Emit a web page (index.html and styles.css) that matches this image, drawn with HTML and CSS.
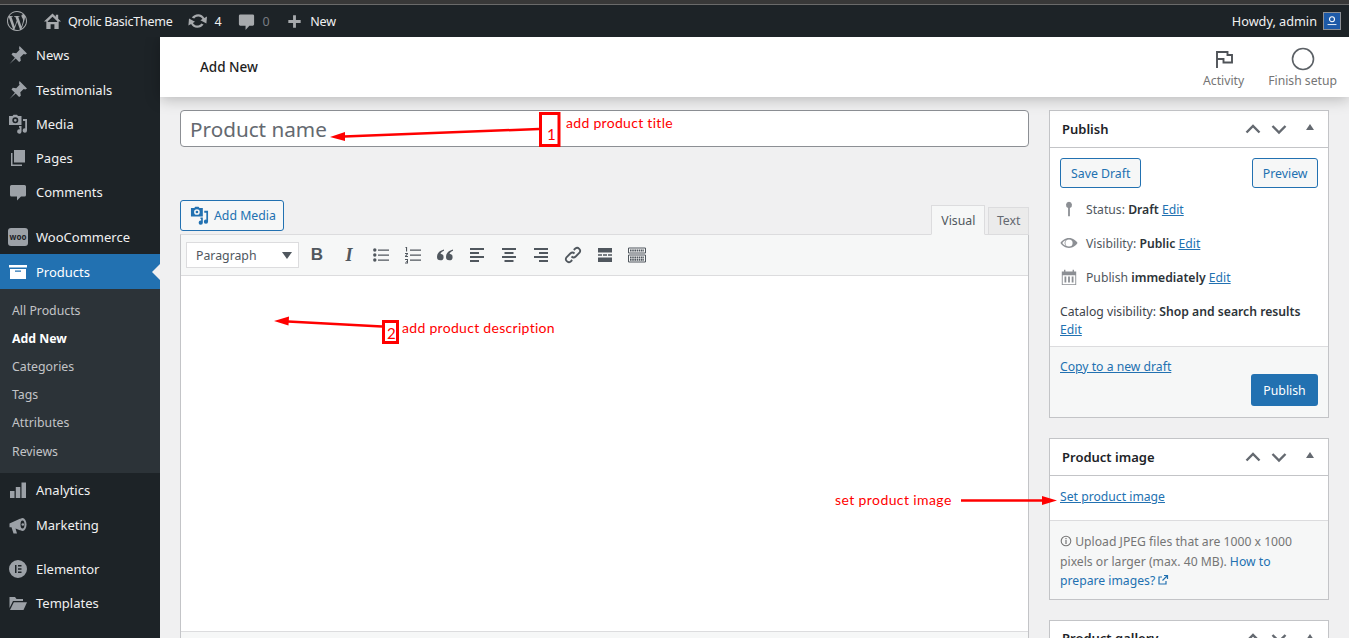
FILE: index.html
```html
<!DOCTYPE html>
<html lang="en">
<head>
  <meta charset="UTF-8">
  <meta name="viewport" content="width=device-width, initial-scale=1.0">
  <title>Add New Product</title>
  <link rel="stylesheet" href="styles.css">
</head>
<body>

<svg class="defs" width="0" height="0">
  <defs>
    <symbol id="i-pin" viewBox="0 0 20 20"><path d="M11.500 1l7.500 7.500-1.700 1-1.600-.6-3.400 3.400.5 3.400-1.700 1.300-3.400-3.400-6.200 5.400 5.400-6.200-3.400-3.400 1.300-1.700 3.400.5 3.400-3.400-.6-1.600z"/></symbol>
    <symbol id="i-media" viewBox="0 0 20 20"><path d="M1 2h3.500l1-1.200h3.500l1 1.200h3.500v9H1zM7.300 3.300a3 3 0 1 0 0 6 3 3 0 0 0 0-6zM7.300 4.900a1.400 1.400 0 1 1 0 2.800 1.400 1.400 0 0 1 0-2.800z" fill-rule="evenodd"/><path d="M15 5h4v11.500a2.200 2.200 0 1 1-1.800-2.100V7H15zM11 12h2.500v5.500a2.200 2.200 0 1 1-1.800-2.100v-1.600H11z"/></symbol>
    <symbol id="i-up" viewBox="0 0 20 20"><path d="M3.500 13.500L10 7l6.500 6.500" fill="none" stroke-width="2.400"/></symbol>
    <symbol id="i-down" viewBox="0 0 20 20"><path d="M3.500 7L10 13.500 16.500 7" fill="none" stroke-width="2.400"/></symbol>
  </defs>
</svg>

<div class="top-strip"></div>

<!-- admin bar -->
<div class="adminbar">
  <div class="bar-left">
    <svg class="wp-logo" viewBox="0 0 24 24"><path d="M21.469 6.825c.84 1.537 1.318 3.3 1.318 5.175 0 3.979-2.156 7.456-5.363 9.325l3.295-9.527c.615-1.54.82-2.771.82-3.864 0-.405-.026-.78-.07-1.11m-7.981.105c.647-.03 1.232-.105 1.232-.105.582-.075.514-.93-.067-.899 0 0-1.755.135-2.88.135-1.064 0-2.85-.15-2.85-.15-.585-.03-.661.855-.075.885 0 0 .54.061 1.125.09l1.68 4.605-2.37 7.08L5.354 6.9c.649-.03 1.234-.1 1.234-.1.585-.075.516-.93-.065-.896 0 0-1.746.138-2.874.138-.2 0-.438-.008-.69-.015C4.911 3.15 8.235 1.215 12 1.215c2.809 0 5.365 1.072 7.286 2.833-.046-.003-.091-.009-.141-.009-1.06 0-1.812.923-1.812 1.914 0 .89.513 1.643 1.06 2.531.411.72.89 1.643.89 2.977 0 .915-.354 1.994-.821 3.479l-1.075 3.585-3.9-11.61.001.014zM12 22.784c-1.059 0-2.081-.153-3.048-.437l3.237-9.406 3.315 9.087c.024.053.05.101.078.149-1.12.393-2.325.609-3.582.609M1.211 12c0-1.564.336-3.05.935-4.39L7.29 21.709C3.694 19.96 1.212 16.271 1.211 12M12 0C5.385 0 0 5.385 0 12s5.385 12 12 12 12-5.385 12-12S18.615 0 12 0"/></svg>
    <span class="bar-item site">
      <svg class="bar-icon" viewBox="0 0 20 20"><path d="M10 1.500L1 10h2.500v8h4.500v-5h4v5h4.500v-8H19l-3-2.800V3h-2.500v1.900zM10 5l5 4.700v.8H5v-.8z" fill-rule="evenodd"/></svg>
      Qrolic BasicTheme
    </span>
    <span class="bar-item updates">
      <svg class="bar-icon" viewBox="0 0 20 20"><path d="M10.200 3.300c2.700 0 5 1.500 6.100 3.800L19 5.500l-.6 7-6-3.300 2.100-1.200c-.8-1.500-2.400-2.600-4.300-2.600-1.700 0-3.200.9-4 2.200L3.800 6.600c1.300-2 3.700-3.300 6.400-3.300zM1 7.500l6 3.300-2.100 1.200c.8 1.500 2.400 2.600 4.300 2.600 1.700 0 3.200-.9 4-2.200l2.400 1c-1.300 2-3.700 3.300-6.400 3.300-2.700 0-5-1.500-6.100-3.800L.4 14.500z"/></svg>
      4
    </span>
    <span class="bar-item comments">
      <svg class="bar-icon" viewBox="0 0 20 20"><path d="M3.500 2.500h13a1.500 1.500 0 0 1 1.500 1.500v9a1.500 1.500 0 0 1-1.500 1.500H13L9 19v-4.500H3.500A1.500 1.500 0 0 1 2 13V4a1.500 1.500 0 0 1 1.500-1.500z"/></svg>
      <span class="dim">0</span>
    </span>
    <span class="bar-item new">
      <svg class="bar-icon" viewBox="0 0 20 20"><path d="M8.500 3.500h3v5h5v3h-5v5h-3v-5h-5v-3h5z"/></svg>
      New
    </span>
  </div>
  <div class="bar-right">
    Howdy, admin
    <span class="avatar"><svg viewBox="0 0 18 18"><circle cx="9" cy="7" r="2.800" fill="none" stroke="#fff" stroke-width="1.200"/><path d="M4 13h10" stroke="#fff" stroke-width="1"/></svg></span>
  </div>
</div>

<div class="layout">

  <!-- sidebar -->
  <nav class="sidebar">
    <a class="menu-item"><svg class="menu-icon"><use href="#i-pin"/></svg>News</a>
    <a class="menu-item"><svg class="menu-icon"><use href="#i-pin"/></svg>Testimonials</a>
    <a class="menu-item"><svg class="menu-icon"><use href="#i-media"/></svg>Media</a>
    <a class="menu-item"><svg class="menu-icon" viewBox="0 0 20 20"><path d="M6 2h11v12.500H6z"/><path d="M3 5h1.500v11.500H14V18H3z"/></svg>Pages</a>
    <a class="menu-item"><svg class="menu-icon" viewBox="0 0 20 20"><path d="M3.500 3h13A1.500 1.500 0 0 1 18 4.500v8.500a1.500 1.500 0 0 1-1.500 1.500H13L9 18.500v-4H3.500A1.500 1.500 0 0 1 2 13V4.500A1.500 1.500 0 0 1 3.500 3z"/></svg>Comments</a>
    <div class="menu-sep"></div>
    <a class="menu-item"><span class="woo-icon">woo</span>WooCommerce</a>
    <a class="menu-item current"><svg class="menu-icon" viewBox="0 0 20 20"><path d="M1 3h18v2.500H1zM2 7h16v10H2zM7 8.500v1.200h6V8.500z" fill-rule="evenodd"/></svg>Products</a>
    <div class="submenu">
      <a>All Products</a>
      <a class="active">Add New</a>
      <a>Categories</a>
      <a>Tags</a>
      <a>Attributes</a>
      <a class="last">Reviews</a>
    </div>
    <a class="menu-item"><svg class="menu-icon" viewBox="0 0 20 20"><path d="M2 11h4.500v7H2zM7.800 7h4.500v11H7.800zM13.500 2.500H18V18h-4.500z"/></svg>Analytics</a>
    <a class="menu-item"><svg class="menu-icon" viewBox="0 0 20 20"><path d="M1.500 8.500L12.500 3.500v12L7.500 13.500l1.500 5H5.500l-2-6.200H1.500z"/><ellipse cx="14.500" cy="9.500" rx="4" ry="6.500"/><ellipse cx="14.500" cy="9.500" rx="2" ry="4" fill="#1d2327"/><circle cx="14.800" cy="9.500" r="1.300"/></svg>Marketing</a>
    <div class="menu-sep short"></div>
    <a class="menu-item"><svg class="menu-icon" viewBox="0 0 20 20"><path d="M10 1a9 9 0 1 0 0 18 9 9 0 0 0 0-18zM7 6h1.500v8H7zM10 6h3.500v1.500H10zM10 9.200h3.500v1.500H10zM10 12.500h3.500V14H10z" fill-rule="evenodd"/></svg>Elementor</a>
    <a class="menu-item"><svg class="menu-icon" viewBox="0 0 20 20"><path d="M1.500 4h5.500l1.500 2H15v2H5L1.500 15z"/><path d="M5.800 9.200H19L15.500 17H2z"/></svg>Templates</a>
  </nav>

  <div class="main">
    <header class="page-header">
      <h1>Add New</h1>
      <div class="header-actions">
        <div class="header-action">
          <svg viewBox="0 0 24 24"><path d="M5 21V5h10.500v3H20v7.500h-8.500V12H5" fill="none" stroke="#4f5358" stroke-width="1.900"/></svg>
          <span>Activity</span>
        </div>
        <div class="header-action">
          <svg viewBox="0 0 24 24"><circle cx="12" cy="12" r="10.500" fill="none" stroke="#5c6166" stroke-width="1.600"/></svg>
          <span>Finish setup</span>
        </div>
      </div>
    </header>

    <div class="columns">
      <div class="col-left">
        <div class="title-input">Product name</div>

        <div class="editor-head">
          <button class="btn add-media"><svg class="media-icon"><use href="#i-media"/></svg>Add Media</button>
          <div class="tabs">
            <span class="tab on">Visual</span>
            <span class="tab">Text</span>
          </div>
        </div>

        <div class="editor">
          <div class="toolbar">
            <div class="format-select">Paragraph<i class="caret"></i></div>
            <span class="tool tool-b">B</span>
            <span class="tool tool-i">I</span>
            <span class="tool"><svg viewBox="0 0 20 20"><path d="M7 4.500h11v1.200H7zM7 9.500h11v1.200H7zM7 14.500h11v1.200H7z"/><circle cx="3.800" cy="5" r="1.700"/><circle cx="3.800" cy="10" r="1.700"/><circle cx="3.800" cy="15" r="1.700"/></svg></span>
            <span class="tool"><svg viewBox="0 0 20 20"><path d="M7 4.500h11v1.200H7zM7 9.500h11v1.200H7zM7 14.500h11v1.200H7z"/><path d="M2.500 2h1.600v4.500H3V3H2.500zM2 8h3v1L3.300 11H5v1H2v-1l1.800-2H2zM2 14h3v4.500H2v-.9h2v-.9H3v-.8h1v-1H2z"/></svg></span>
            <span class="tool"><svg viewBox="0 0 20 20"><path d="M9 4.500C5 5.500 2 8 2 12a3.300 3.300 0 1 0 3.500-3.300C6 7.400 7.500 6.300 9 5.800zM18 4.500C14 5.500 11 8 11 12a3.300 3.300 0 1 0 3.500-3.300c.5-1.300 2-2.400 3.500-2.900z"/></svg></span>
            <span class="tool"><svg viewBox="0 0 20 20"><path d="M3 3h14v2H3zM3 7h9v2H3zM3 11h14v2H3zM3 15h9v2H3z"/></svg></span>
            <span class="tool"><svg viewBox="0 0 20 20"><path d="M3 3h14v2H3zM5.500 7h9v2h-9zM3 11h14v2H3zM5.500 15h9v2h-9z"/></svg></span>
            <span class="tool"><svg viewBox="0 0 20 20"><path d="M3 3h14v2H3zM8 7h9v2H8zM3 11h14v2H3zM8 15h9v2H8z"/></svg></span>
            <span class="tool"><svg viewBox="0 0 20 20"><path d="M8.500 11.500a3 3 0 0 0 4.200 0l3.800-3.800a3 3 0 0 0-4.200-4.200l-1.500 1.500M11.500 8.500a3 3 0 0 0-4.200 0l-3.800 3.800a3 3 0 0 0 4.200 4.200l1.500-1.500" fill="none" stroke="#50575e" stroke-width="1.800"/></svg></span>
            <span class="tool"><svg viewBox="0 0 20 20"><path d="M3 3h14v4.500H3zM3 12.500h14V17H3zM3 9.300h4v1.400H3zM8 9.300h4v1.400H8zM13 9.300h4v1.400h-4z"/></svg></span>
            <span class="tool"><svg viewBox="0 0 20 20"><path d="M1.500 3h17v5h-17zM1.500 10h17v7h-17z" fill="none" stroke="#50575e" stroke-width="1"/><path d="M3 5.500h14M3 12.500h14M3 14.800h14" fill="none" stroke="#50575e" stroke-width="1.800" stroke-dasharray="1.600 .6"/></svg></span>
          </div>
          <div class="editor-body"></div>
          <div class="editor-foot"></div>
        </div>
      </div>

      <div class="col-right">
        <section class="box publish">
          <div class="box-head">
            <h2>Publish</h2>
            <div class="box-ctrl">
              <svg><use href="#i-up"/></svg>
              <svg><use href="#i-down"/></svg>
              <i class="tri"></i>
            </div>
          </div>
          <div class="publish-actions">
            <button class="btn">Save Draft</button>
            <button class="btn">Preview</button>
          </div>
          <div class="pub-row">
            <svg viewBox="0 0 20 20"><path d="M10 2a3.500 3.500 0 0 0-1 6.800V18h2V8.800A3.500 3.500 0 0 0 10 2z"/></svg>
            <span>Status: <b>Draft</b> <a>Edit</a></span>
          </div>
          <div class="pub-row">
            <svg viewBox="0 0 20 20"><path d="M10 4.500c4.500 0 8 3 9.500 5.500-1.500 2.500-5 5.500-9.500 5.500S2 12.500.5 10C2 7.500 5.500 4.500 10 4.500zM10 6a4 4 0 1 0 0 8 4 4 0 0 0 0-8zM2.500 10c1 1.300 2.300 2.500 4 3.300a5 5 0 0 1 0-6.600c-1.700.8-3 2-4 3.300z" fill-rule="evenodd"/></svg>
            <span>Visibility: <b>Public</b> <a>Edit</a></span>
          </div>
          <div class="pub-row">
            <svg viewBox="0 0 20 20"><path d="M2 4h2.500V2H6v2h8V2h1.500v2H18v15H2zM3 8v10h14V8zM5 9.500h2V16H5zM9 9.500h2V16H9zM13 9.500h2V16h-2z" fill-rule="evenodd"/></svg>
            <span>Publish <b>immediately</b> <a>Edit</a></span>
          </div>
          <div class="catalog">Catalog visibility: <b>Shop and search results</b><br><a>Edit</a></div>
          <div class="box-foot">
            <a>Copy to a new draft</a>
            <button class="btn-primary">Publish</button>
          </div>
        </section>

        <section class="box">
          <div class="box-head">
            <h2>Product image</h2>
            <div class="box-ctrl">
              <svg><use href="#i-up"/></svg>
              <svg><use href="#i-down"/></svg>
              <i class="tri"></i>
            </div>
          </div>
          <div class="image-link"><a>Set product image</a></div>
          <div class="image-note">
            <div class="note-line"><svg class="info" viewBox="0 0 20 20"><circle cx="10" cy="10" r="8" fill="none" stroke="#757575" stroke-width="1.800"/><path d="M9 8.500h2V15H9zM9 5h2v2H9z" fill="#757575"/></svg> Upload JPEG files that are 1000 x 1000</div>
            <div class="note-line">pixels or larger (max. 40 MB). <a class="plain">How to</a></div>
            <div class="note-line"><a class="plain">prepare images?<svg class="ext" viewBox="0 0 12 12"><path d="M9 7v3H2V3h3M7 1.500h3.500V5M10.500 1.500L5.500 6.500" fill="none" stroke="#2271b1" stroke-width="1.200"/></svg></a></div>
          </div>
        </section>

        <section class="box">
          <div class="box-head">
            <h2>Product gallery</h2>
            <div class="box-ctrl">
              <svg><use href="#i-up"/></svg>
              <svg><use href="#i-down"/></svg>
              <i class="tri"></i>
            </div>
          </div>
        </section>
      </div>
    </div>
  </div>
</div>

<!-- red annotations drawn over the screenshot -->
<svg class="notes-art" viewBox="0 0 1349 638">
  <rect x="540.500" y="113.500" width="18.500" height="32" fill="none" stroke="#f00" stroke-width="3"/>
  <path d="M539 129L344 136.500" stroke="#f00" stroke-width="2.500"/>
  <path d="M330 137l15-5 0 9z" fill="#f00"/>
  <rect x="383.500" y="321.500" width="14" height="21" fill="none" stroke="#f00" stroke-width="3"/>
  <path d="M382 326.500L288 321.500" stroke="#f00" stroke-width="2.500"/>
  <path d="M274 321l15-4.500-.5 9z" fill="#f00"/>
  <path d="M961 500.500h86" stroke="#f00" stroke-width="2.500"/>
  <path d="M1057 500.500l-15-4.500v9z" fill="#f00"/>
</svg>
<span class="note num num-1">1</span>
<span class="note label-1">add product title</span>
<span class="note num num-2">2</span>
<span class="note label-2">add product description</span>
<span class="note label-3">set product image</span>

</body>
</html>
```

FILE: styles.css
```css
/* Basic styling */
* { box-sizing: border-box; margin: 0; padding: 0; }
html, body { height: 100%; overflow: hidden; }
body { font-family: "Noto Sans", "Open Sans", sans-serif; font-size: 13px; color: #3c434a; background-color: #f0f0f1; display: flex; flex-direction: column; position: relative; }
a { color: #2271b1; text-decoration: underline; }
b { font-weight: 600; color: #2c3338; }
.defs { position: absolute; }
svg { fill: currentColor; stroke: currentColor; stroke-width: 0; display: block; }

/* Top strip */
.top-strip { height: 5px; background-color: #383838; border-bottom: 1px solid #6a6a6a; flex: none; }

/* Admin bar */
.adminbar { height: 32px; flex: none; background-color: #1d2327; color: #f0f0f1; display: flex; align-items: center; justify-content: space-between; padding: 0 8px 0 7px; font-size: 12.500px; letter-spacing: -0.25px; }
.bar-left { display: flex; align-items: center; }
.wp-logo { width: 20px; height: 20px; color: #a7aaad; margin-right: 16px; }
.bar-item { display: flex; align-items: center; gap: 6px; margin-right: 15px; }
.bar-icon { width: 19px; height: 19px; color: #a7aaad; }
.updates { gap: 7px; margin-right: 16px; }
.updates .bar-icon { width: 20px; height: 20px; }
.comments { gap: 6px; margin-right: 16px; }
.new { gap: 6px; }
.bar-right { display: flex; align-items: center; gap: 6px; letter-spacing: 0; font-size: 12.700px; }
.avatar { width: 18px; height: 18px; background-color: #1d5aa8; border: 1px solid #8c8f94; }
.avatar svg { width: 16px; height: 16px; }
.dim { color: #787c82; }

/* Layout */
.layout { flex: 1; display: flex; min-height: 0; overflow: hidden; }
.sidebar { width: 160px; flex: none; background-color: #1d2327; padding-top: 1.300px; }
.menu-item { height: 34.25px; display: flex; align-items: center; padding-left: 8px; color: #f0f0f1; text-decoration: none; font-size: 13px; position: relative; }
.menu-icon { width: 20px; height: 20px; margin-right: 8px; color: #9ca1a7; flex: none; }
.menu-sep { height: 10.700px; }
.menu-sep.short { height: 10.300px; }
.woo-icon { width: 20px; height: 18px; margin-right: 8px; border-radius: 3px; background-color: #9ca1a7; color: #1d2327; font-size: 8px; font-weight: 700; line-height: 17px; text-align: center; flex: none; }
.menu-item.current { background-color: #2271b1; color: #fff; }
.menu-item.current .menu-icon { color: #fff; }
.menu-item.current::after { content: ""; position: absolute; right: 0; top: 10px; border: 8px solid transparent; border-right-color: #f0f0f1; border-left: 0; }
.submenu { background-color: #2c3338; padding: 7.500px 0 8px; }
.submenu a { height: 28px; display: flex; align-items: center; padding-left: 12px; color: #c3c4c7; text-decoration: none; font-size: 12.300px; }
.submenu a.last { margin-top: 1px; }
.submenu a.active { color: #fff; font-weight: 700; }

/* Page */
.main { flex: 1; min-width: 0; display: flex; flex-direction: column; }
.page-header { height: 60px; flex: none; background-color: #fff; display: flex; align-items: center; justify-content: space-between; padding: 0 12px 0 40px; position: relative; z-index: 1; box-shadow: 0 2px 14px rgba(0, 0, 0, 0.25); }
.page-header h1 { font-size: 13.500px; font-weight: 500; color: #1e1e1e; }
.header-actions { display: flex; gap: 24px; }
.header-action { display: flex; flex-direction: column; align-items: center; gap: 1px; padding-top: 1px; font-size: 12.200px; color: #757575; }
.header-action svg { width: 24px; height: 24px; }

.columns { display: flex; gap: 20px; padding: 13px 20px 0; }
.col-left { flex: 1; min-width: 0; }
.col-right { width: 280px; flex: none; display: flex; flex-direction: column; gap: 20px; }

/* Title and editor */
.title-input { height: 37px; background-color: #fff; border: 1px solid #8c8f94; border-radius: 4px; padding-left: 9px; font-size: 20.700px; line-height: 37px; color: #646970; }
.editor-head { display: flex; justify-content: space-between; align-items: flex-end; margin-top: 53px; height: 34px; }
.btn { height: 30px; padding: 0 10px; background-color: #f6f7f7; border: 1px solid #2271b1; border-radius: 3px; color: #2271b1; font-family: inherit; font-size: 12.300px; }
.publish-actions .btn + .btn { padding: 0 9.500px; }
.add-media { height: 31px; margin-bottom: 3px; display: flex; align-items: center; gap: 5px; padding: 0 7px 0 9px; }
.media-icon { width: 19px; height: 19px; }
.tabs { display: flex; gap: 3px; align-items: flex-end; margin-bottom: -1px; position: relative; }
.tab { height: 28px; padding: 0 7.500px; border: 1px solid #dcdcde; background-color: #ebebeb; color: #646970; font-size: 12.300px; line-height: 26px; }
.tab.on { height: 30px; padding: 0 9px; line-height: 30px; background-color: #f6f7f7; border-bottom-color: #f6f7f7; color: #50575e; }

.editor { border: 1px solid #dcdcde; border-left-color: #c3c4c7; border-right-color: #c3c4c7; background-color: #fff; }
.toolbar { height: 41px; background-color: #f6f7f7; border-bottom: 1px solid #dcdcde; display: flex; align-items: center; padding-left: 5px; }
.format-select { width: 113px; height: 26px; margin-right: 2px; background-color: #fff; border: 1px solid #dcdcde; padding: 0 9px; display: flex; align-items: center; justify-content: space-between; font-size: 12.300px; color: #50575e; }
.caret { border: 5px solid transparent; border-top: 7px solid #50575e; border-bottom: 0; margin-right: -3px; }
.tool { width: 32px; height: 26px; display: flex; align-items: center; justify-content: center; color: #50575e; }
.tool svg { width: 20px; height: 20px; }
.tool-b { font-family: "Liberation Sans", sans-serif; font-weight: 700; font-size: 17px; }
.tool-i { font-family: "Liberation Serif", serif; font-weight: 700; font-style: italic; font-size: 18px; }
.editor-body { height: 355px; }
.editor-foot { height: 40px; border-top: 1px solid #dcdcde; background-color: #f6f7f7; }

/* Sidebar boxes */
.box { background-color: #fff; border: 1px solid #c3c4c7; flex: none; }
.box-head { height: 37px; border-bottom: 1px solid #c3c4c7; display: flex; align-items: center; justify-content: space-between; padding: 0 14px 1px 12px; }
.box-head h2 { font-size: 13px; font-weight: 600; color: #1d2327; }
.box-ctrl { display: flex; align-items: center; gap: 6px; color: #646970; }
.box-ctrl svg { width: 20px; height: 20px; stroke-width: 2.400; }
.tri { border: 4.500px solid transparent; border-bottom: 6px solid #646970; border-top: 0; margin-left: 11px; margin-bottom: 3px; }

.publish-actions { display: flex; justify-content: space-between; padding: 10px 10px 0; }
.pub-row { display: flex; align-items: center; height: 34px; padding-left: 10px; font-size: 12.200px; gap: 8px; color: #50575e; }
.publish-actions + .pub-row { margin-top: 4px; }
.pub-row svg { width: 18px; height: 18px; color: #8c8f94; flex: none; }
.catalog { padding: 9px 10px 7px; font-size: 12.200px; line-height: 18px; color: #3c434a; }
.box-foot { background-color: #f6f7f7; border-top: 1px solid #dcdcde; padding: 11px 10px 9px; font-size: 12.200px; display: flex; flex-direction: column; align-items: flex-start; height: 71px; }
.btn-primary { align-self: flex-end; flex: none; width: 67px; height: 32px; margin-top: -0.600px; background-color: #2271b1; border: 0; border-radius: 3px; color: #fff; font-family: inherit; font-size: 12.300px; }

.image-link { height: 44px; padding: 12px 10px; font-size: 12.200px; }
.image-note { background-color: #f6f7f7; border-top: 1px solid #dcdcde; padding: 11px 10px 8px; font-size: 12.200px; line-height: 19.500px; color: #757575; }
.info { display: inline-block; width: 12px; height: 12px; vertical-align: -1px; }
.ext { display: inline-block; width: 12px; height: 12px; margin-left: 2px; vertical-align: -1px; }
a.plain { text-decoration: none; }

/* Annotations */
.notes-art { position: absolute; left: 0; top: 0; width: 1349px; height: 638px; z-index: 5; }
.note { position: absolute; z-index: 6; color: #f00; font-family: "Lato", sans-serif; font-size: 14px; white-space: nowrap; letter-spacing: 0.3px; line-height: 18px; }
.num { font-size: 15px; letter-spacing: 0; }
.num-1 { left: 547px; top: 125px; }
.label-1 { left: 566px; top: 114px; }
.num-2 { left: 387px; top: 324px; }
.label-2 { left: 402px; top: 319px; }
.label-3 { left: 835px; top: 491px; letter-spacing: 0.400px; }
```
